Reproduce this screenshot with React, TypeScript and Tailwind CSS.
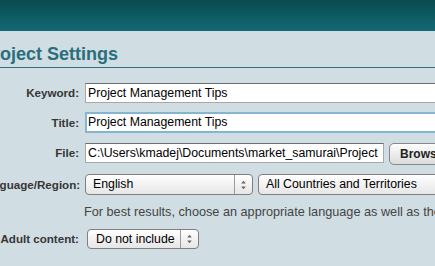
import React from "react";

const FONT = { fontFamily: '"Liberation Sans", Arial, sans-serif' };

function Stepper() {
  return (
    <div className="flex h-full w-[18px] shrink-0 items-center justify-center border-l border-[#9a9a9a]">
      <svg width="7" height="10" viewBox="0 0 7 10">
        <path d="M3.5 0.8 L5.8 3.6 L1.2 3.6 Z" fill="#666" />
        <path d="M3.5 9.2 L5.8 6.4 L1.2 6.4 Z" fill="#666" />
      </svg>
    </div>
  );
}

function Select({ value, className, stepper = true, pl = "pl-[7px]" }: { value: string; className: string; stepper?: boolean; pl?: string }) {
  return (
    <div className={`flex shrink-0 items-center overflow-hidden rounded-[4px] border border-[#7f7f7f] bg-gradient-to-b from-white to-[#e6e6e6] text-[12.3px] text-black ${className}`}>
      <span className={`flex-1 whitespace-nowrap ${pl}`}>{value}</span>
      {stepper && <Stepper />}
    </div>
  );
}

function Label({ children }: { children: React.ReactNode }) {
  return (
    <div className="w-[100px] shrink-0 whitespace-nowrap text-right text-[11.6px] font-bold text-[#363636]">
      {children}
    </div>
  );
}

export default function App() {
  return (
    <div className="h-[266px] w-[435px] overflow-hidden bg-[#d0dde3]" style={FONT}>
      {/* header band */}
      <div className="h-[31px] bg-gradient-to-b from-[#0a4b50] to-[#136974]" />

      <h1 className="ml-[-19px] mt-[12px] whitespace-nowrap text-[18px] font-bold leading-[22px] text-[#2a6e7d]">
        Project Settings
      </h1>
      <div className="mt-[2px] h-px w-full bg-[#2f7080]" />

      <div className="ml-[-21px]">
        <div className="mt-[15px] flex items-center gap-[6px]">
          <Label>Keyword:</Label>
          <div className="flex h-[20px] w-[400px] shrink-0 items-center whitespace-nowrap border border-[#a8a8a8] border-t-[#6e6e6e] bg-white pl-[2px] text-[12.3px] text-black">
            Project Management Tips
          </div>
        </div>

        <div className="mt-[9px] flex items-center gap-[6px]">
          <Label>Title:</Label>
          <div className="flex h-[21px] w-[400px] shrink-0 items-center whitespace-nowrap border-2 border-[#86b5d4] bg-white pl-[1px] text-[12.3px] text-black">
            Project Management Tips
          </div>
        </div>

        <div className="mt-[10px] flex items-start gap-[6px]">
          <div className="flex h-[20px] items-center">
            <Label>File:</Label>
          </div>
          <div className="flex h-[20px] w-[299px] shrink-0 items-center overflow-hidden whitespace-nowrap border border-[#a8a8a8] border-t-[#6e6e6e] bg-white pl-[2px] text-[12.3px] text-black">
            C:\Users\kmadej\Documents\market_samurai\Project
          </div>
          <div className="ml-[-1px] flex h-[22px] w-[76px] shrink-0 items-center rounded-[5px] border border-[#888] bg-gradient-to-b from-[#fdfdfd] to-[#dcdcdc] pl-[10px] text-[12px] font-bold text-[#222]">
            Browse...
          </div>
        </div>

        <div className="mt-[9px] flex items-center gap-[6px]">
          <Label>Language/Region:</Label>
          <Select value="English" className="h-[21px] w-[168px]" />
          <Select value="All Countries and Territories" className="ml-[-1px] h-[21px] w-[220px]" stepper={false} />
        </div>

        <div className="ml-[105px] mt-[9px] whitespace-nowrap text-[12.7px] leading-[16px] text-[#444]">
          For best results, choose an appropriate language as well as the country
        </div>

        <div className="mt-[9px] flex items-center gap-[6px]">
          <Label>Adult content:</Label>
          <Select value="Do not include" className="ml-[2px] h-[20px] w-[112px]" pl="pl-[8px]" />
        </div>
      </div>
    </div>
  );
}
